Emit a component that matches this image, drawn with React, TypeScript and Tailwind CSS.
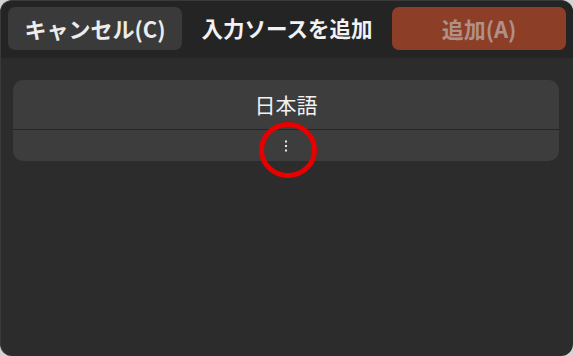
export default function App() {
  const font = { fontFamily: '"Noto Sans CJK JP", "Noto Sans", sans-serif' };
  return (
    <div className="h-[356px] w-[573px] bg-[#d4d4d4]" style={font}>
      <div className="relative flex h-full w-full flex-col overflow-hidden rounded-[12px] border-l border-t border-[#3a3a3a] bg-[#2c2c2c]">
        <header className="flex h-[57px] items-start justify-between bg-[#242424] px-[7px] pt-[6px]">
          <button className="flex h-[43px] w-[174px] shrink-0 items-center justify-center rounded-[7px] bg-[#3a3a3a] text-[22px] font-bold text-[#ececec]">
            キャンセル(C)
          </button>
          <h1 className="flex h-[43px] items-center justify-center whitespace-nowrap text-[21.5px] font-bold text-[#f2f2f2]">
            入力ソースを追加
          </h1>
          <button
            disabled
            className="flex h-[43px] w-[174px] shrink-0 items-center justify-center rounded-[7px] bg-[#8c3f26] text-[22px] font-bold text-[#b09087]"
          >
            追加(A)
          </button>
        </header>
        <div className="px-[12px] pt-[22px] pr-[14px]">
          <div className="overflow-hidden rounded-[10px] bg-[#3d3d3d]">
            <div className="flex h-[49px] items-center justify-center text-[21px] text-[#f2f2f2]">
              日本語
            </div>
            <div className="h-px bg-[#262626]" />
            <div className="flex h-[31px] items-center justify-center">
              <svg width="4" height="12" viewBox="0 0 4 12" className="ml-[-1px]">
                <rect x="1" y="0.5" width="2" height="2" fill="#e8e8e8" />
                <rect x="1" y="5" width="2" height="2" fill="#e8e8e8" />
                <rect x="1" y="9.5" width="2" height="2" fill="#e8e8e8" />
              </svg>
            </div>
          </div>
        </div>
        <svg
          className="pointer-events-none absolute left-[257px] top-[120px]"
          width="60"
          height="58"
          viewBox="0 0 60 58"
        >
          <ellipse cx="30" cy="29" rx="26.5" ry="25.5" fill="none" stroke="#e60000" strokeWidth="5" />
        </svg>
      </div>
    </div>
  );
}
